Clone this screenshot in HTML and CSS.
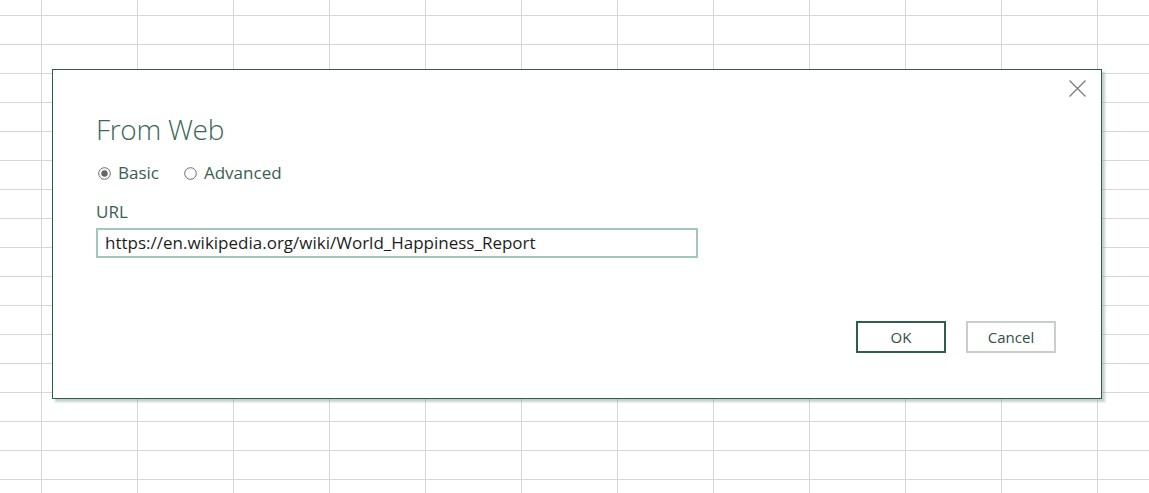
FILE: index.html
```html
<!DOCTYPE html>
<html>
<head>
<meta charset="utf-8">
<link rel="stylesheet" href="styles.css">
</head>
<body>
<div class="sheet">
  <div class="dialog">
    <button class="close" aria-label="Close">
      <svg width="17" height="17" viewBox="0 0 17 17"><path d="M0.5 0.5 L16.5 16.5 M16.5 0.5 L0.5 16.5" stroke="#7a7a7a" stroke-width="1.2" fill="none"/></svg>
    </button>
    <h1 class="title">From Web</h1>
    <div class="radios">
      <label class="radio">
        <svg class="radio-icon" width="13" height="13" viewBox="0 0 13 13"><circle cx="6.5" cy="6.5" r="5.8" fill="#fff" stroke="#6b6b6b" stroke-width="1"/><circle cx="6.5" cy="6.5" r="3.2" fill="#666"/></svg>
        <span>Basic</span>
      </label>
      <label class="radio">
        <svg class="radio-icon" width="13" height="13" viewBox="0 0 13 13"><circle cx="6.5" cy="6.5" r="5.8" fill="#fff" stroke="#6b6b6b" stroke-width="1"/></svg>
        <span>Advanced</span>
      </label>
    </div>
    <div class="field-label">URL</div>
    <div class="url-input">https://en.wikipedia.org/wiki/World_Happiness_Report</div>
    <div class="actions">
      <button class="btn btn-primary">OK</button>
      <button class="btn btn-secondary">Cancel</button>
    </div>
  </div>
</div>
</body>
</html>
```

FILE: styles.css
```css
html, body {
  margin: 0;
  padding: 0;
  height: 100%;
}
body {
  font-family: "Open Sans", "Noto Sans", sans-serif;
  background-color: #ffffff;
  background-image:
    linear-gradient(to right, #d6d6d6 1px, transparent 1px),
    linear-gradient(to bottom, #d6d6d6 1px, transparent 1px);
  background-size: 96px 29px;
  background-position: 41px 15px;
  overflow: hidden;
}
.sheet {
  position: relative;
  width: 1149px;
  height: 493px;
}
.dialog {
  position: absolute;
  left: 52px;
  top: 69px;
  width: 960px;
  height: 328px;
  background: #ffffff;
  border: 1px solid #2c5e4c;
  box-shadow: 3px 3px 2px rgba(150, 170, 160, 0.55);
  display: flex;
  flex-direction: column;
  padding: 0 45px 0 43px;
  box-sizing: content-box;
}
.close {
  position: absolute;
  top: 10px;
  right: 15px;
  width: 17px;
  height: 17px;
  padding: 0;
  border: none;
  background: transparent;
  display: flex;
}
.title {
  margin: 41px 0 0 0;
  font-weight: 300;
  font-size: 28px;
  line-height: 36px;
  color: #3d6657;
  letter-spacing: -0.3px;
}
.radios {
  display: flex;
  gap: 23px;
  margin-top: 15px;
  color: #3a5e51;
  font-size: 17px;
  line-height: 22px;
}
.radio {
  display: flex;
  align-items: center;
  gap: 7px;
}
.radio-icon {
  margin-left: 2px;
  display: block;
}
.field-label {
  margin-top: 17px;
  font-size: 17px;
  line-height: 22px;
  color: #3a5e51;
}
.url-input {
  margin-top: 5px;
  height: 26px;
  border: 2px solid #a3c9b6;
  font-size: 17px;
  line-height: 26px;
  padding: 0 0 0 7px;
  box-sizing: content-box;
  color: #1e1e1e;
  width: 591px;
}
.actions {
  display: flex;
  justify-content: flex-end;
  gap: 20px;
  margin-top: 63px;
}
.btn {
  width: 90px;
  height: 32px;
  box-sizing: border-box;
  background: #ffffff;
  font-family: "Open Sans", "Noto Sans", sans-serif;
  font-size: 15px;
  color: #2f4f44;
  padding: 0;
}
.btn-primary {
  border: 2px solid #2f5d4e;
}
.btn-secondary {
  border: 2px solid #c9cfcc;
}
```
